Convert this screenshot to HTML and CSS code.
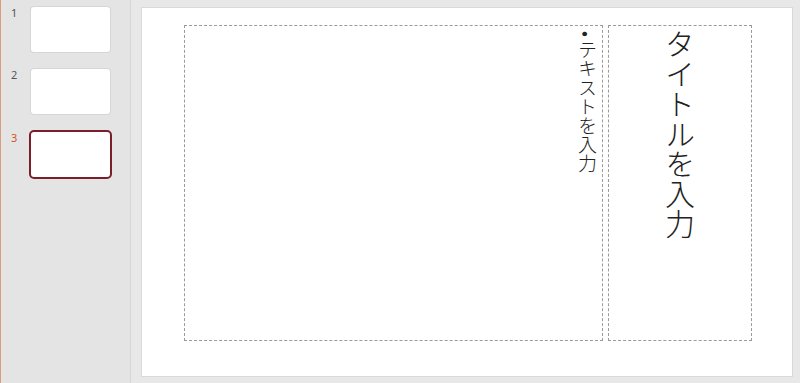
FILE: index.html
```html
<!DOCTYPE html>
<html lang="ja">
<head>
    <meta charset="UTF-8">
    <title>スライド</title>
    <link rel="stylesheet" href="styles.css">
</head>
<body>
    <div class="app">
        <div class="thumb-pane">
            <div class="thumb-row">
                <span class="thumb-num">1</span>
                <div class="thumb"></div>
            </div>
            <div class="thumb-row">
                <span class="thumb-num">2</span>
                <div class="thumb"></div>
            </div>
            <div class="thumb-row selected">
                <span class="thumb-num">3</span>
                <div class="thumb"></div>
            </div>
        </div>
        <div class="editor">
            <div class="slide">
                <div class="placeholder body-box">
                    <ul class="body-text">
                        <li>テキストを入力</li>
                    </ul>
                </div>
                <div class="placeholder title-box">
                    <div class="title-text">タイトルを入力</div>
                </div>
            </div>
        </div>
    </div>
</body>
</html>
```

FILE: styles.css
```css
html, body {
    margin: 0;
    padding: 0;
    height: 100%;
}

body {
    font-family: "Noto Sans", "Noto Sans CJK JP", sans-serif;
    background-color: #e6e6e6;
}

.app {
    display: flex;
    height: 383px;
}

/* left thumbnail list */
.thumb-pane {
    width: 131px;
    flex-shrink: 0;
    box-sizing: border-box;
    background-color: #e4e4e4;
    border-left: 1px solid #dc9a7f;
    border-right: 1px solid #d6d6d6;
    padding-top: 7px;
}

.thumb-row {
    display: flex;
    align-items: flex-start;
    height: 62px;
}

.thumb-num {
    width: 30px;
    padding-left: 10px;
    box-sizing: border-box;
    font-size: 11px;
    line-height: 12px;
    color: #555555;
}

.thumb {
    width: 79px;
    height: 45px;
    background-color: #ffffff;
    border-radius: 3px;
    box-shadow: 0 0 0 1px #d6d6d6;
}

.thumb-row.selected .thumb-num {
    color: #d35230;
    margin-top: 1px;
}

.thumb-row.selected .thumb {
    box-shadow: none;
    border: 2px solid #7a1f2a;
    border-radius: 5px;
    margin-left: -2px;
    margin-top: -1px;
}

/* editing area */
.editor {
    flex: 1;
    padding: 7px 7px 6px 10px;
    background-color: #e8e8e8;
}

.slide {
    height: 100%;
    box-sizing: border-box;
    background-color: #ffffff;
    border: 1px solid #d9d9d9;
    display: flex;
    gap: 5px;
    padding: 17px 0 0 42px;
}

.placeholder {
    border: 1px dashed #9a9a9a;
    height: 316px;
    box-sizing: border-box;
}

.body-box {
    width: 419px;
    writing-mode: vertical-rl;
}

.title-box {
    width: 144px;
    writing-mode: vertical-rl;
    display: flex;
    justify-content: flex-start;
    align-items: center;
}

.body-text {
    margin: 0;
    padding: 5px 4px 0 0;
    font-family: "Noto Sans CJK JP", sans-serif;
    font-weight: 300;
    font-size: 19px;
    line-height: 22px;
    color: #222222;
    list-style: none;
}

.body-text li::before {
    content: "•";
    display: inline-block;
    margin-bottom: 3px;
}

.title-text {
    padding-top: 3px;
    font-family: "Noto Sans CJK JP", sans-serif;
    font-weight: 300;
    font-size: 30px;
    line-height: 36px;
    color: #222222;
}
```
